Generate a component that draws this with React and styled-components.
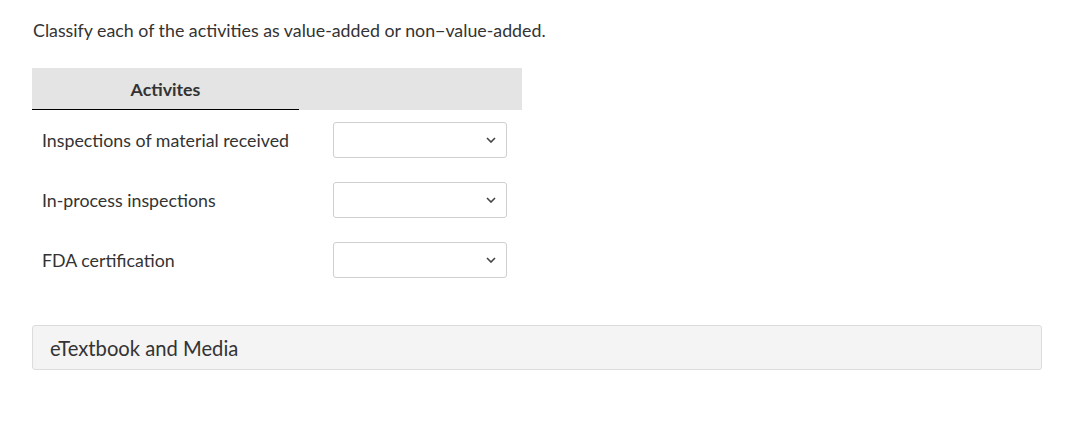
import styled, { createGlobalStyle } from 'styled-components'

const Global = createGlobalStyle`
body {
  margin: 0;
  background: #fff;
  font-family: Lato, "Open Sans", sans-serif;
  color: #333;
}
`

const Page = styled.div`
padding: 19px 0 0 32px;
width: 1010px;
`

const Prompt = styled.p`
margin: 0 0 0 1px;
font-size: 17.8px;
line-height: 22px;
`

const Table = styled.table`
margin-top: 27px;
border-collapse: collapse;
border-spacing: 0;
font-size: 17.8px;
`

const HeadCell = styled.th`
height: 41px;
padding: 0;
background: #e4e4e4;
font-weight: 700;
text-align: center;
width: ${p => p.$w}px;
border-bottom: 1px solid ${p => (p.$line ? '#000' : '#e4e4e4')};
`

const LabelCell = styled.td`
height: 60px;
padding: 0 0 0 10px;
`

const SelectCell = styled.td`
padding: 0 0 0 34px;
vertical-align: middle;
`

const SelectBox = styled.div`
width: 162px;
height: 34px;
border: 1px solid #cfcfcf;
border-radius: 3px;
background: #fff;
display: flex;
align-items: center;
justify-content: flex-end;
padding-right: 10px;
box-sizing: content-box;
`

const Chevron = () => (
  <svg width="10" height="6" viewBox="0 0 10 6">
    <polyline points="1,1 5,5 9,1" fill="none" stroke="#444" strokeWidth="1.6" />
  </svg>
)

const Media = styled.div`
margin-top: 35px;
height: 43px;
border: 1px solid #dcdcdc;
border-radius: 3px;
background: #f4f4f4;
display: flex;
align-items: center;
padding-left: 17px;
font-size: 20.2px;
color: #333;
`

const rows = ['Inspections of material received', 'In-process inspections', 'FDA certification']

const App = () => (
  <Page>
    <Global />
    <Prompt>Classify each of the activities as value-added or non−value-added.</Prompt>
    <Table>
      <thead>
        <tr>
          <HeadCell $w={267} $line>Activites</HeadCell>
          <HeadCell $w={223} />
        </tr>
      </thead>
      <tbody>
        {rows.map(r => (
          <tr key={r}>
            <LabelCell>{r}</LabelCell>
            <SelectCell>
              <SelectBox>
                <Chevron />
              </SelectBox>
            </SelectCell>
          </tr>
        ))}
      </tbody>
    </Table>
    <Media>eTextbook and Media</Media>
  </Page>
)

export default App
